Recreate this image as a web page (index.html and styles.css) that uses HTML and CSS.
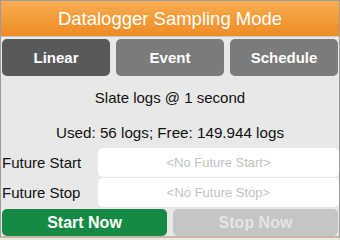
FILE: index.html
```html
<!DOCTYPE html>
<html>
<head>
<meta charset="utf-8">
<link rel="stylesheet" href="styles.css">
</head>
<body>
<div class="frame">
  <div class="header">Datalogger Sampling Mode</div>
  <div class="modes">
    <div class="mode active">Linear</div>
    <div class="mode">Event</div>
    <div class="mode">Schedule</div>
  </div>
  <div class="info first">Slate logs @ 1 second</div>
  <div class="info second">Used: 56 logs; Free: 149.944 logs</div>
  <div class="row">
    <div class="label">Future Start</div>
    <div class="field">&lt;No Future Start&gt;</div>
  </div>
  <div class="row">
    <div class="label">Future Stop</div>
    <div class="field">&lt;No Future Stop&gt;</div>
  </div>
  <div class="actions">
    <div class="btn start">Start Now</div>
    <div class="btn stop">Stop Now</div>
  </div>
</div>
</body>
</html>
```
FILE: styles.css
```css
html, body { margin: 0; padding: 0; }
body {
  width: 340px;
  height: 240px;
  font-family: "Liberation Sans", Arial, sans-serif;
  background: #e9e9e9;
  overflow: hidden;
}
.frame {
  width: 340px;
  height: 238px;
  box-sizing: border-box;
  border: 1px solid #9c9c9c;
  border-bottom: 2px solid #c9b999;
  background: #e8e8e8;
  display: flex;
  flex-direction: column;
}
.header {
  height: 36px;
  background: linear-gradient(#f8ae52, #ee8b23);
  color: #fff;
  font-size: 18.5px;
  display: flex;
  align-items: center;
  justify-content: center;
  border-bottom: 1px solid #c9c9c9;
}
.modes {
  display: flex;
  gap: 6px;
  padding: 1px 1px 0 1px;
  margin-top: 1px;
}
.mode {
  flex: 1;
  height: 37px;
  border-radius: 5px;
  background: #7b7b7b;
  color: #fff;
  font-weight: bold;
  font-size: 15px;
  display: flex;
  align-items: center;
  justify-content: center;
}
.mode.active { background: #58595a; }
.info {
  text-align: center;
  font-size: 15px;
  color: #111;
}
.info.first { margin-top: 13px; }
.info.second { margin-top: 18px; font-size: 15.2px; }
.row {
  display: flex;
  align-items: center;
  height: 30px;
}
.info.second + .row { margin-top: 7px; }
.label {
  width: 96px;
  font-size: 15px;
  color: #111;
  padding-left: 1px;
}
.field {
  flex: 1;
  height: 29px;
  background: #fff;
  border-radius: 5px;
  color: #c2c2c2;
  font-size: 13px;
  display: flex;
  align-items: center;
  justify-content: center;
}
.actions {
  display: flex;
  gap: 6px;
  padding: 2px 1px 0 1px;
}
.btn {
  flex: 1;
  height: 27px;
  border-radius: 5px;
  font-weight: bold;
  font-size: 16px;
  display: flex;
  align-items: center;
  justify-content: center;
}
.btn.start { background: #158a45; color: #fff; }
.btn.stop { background: #c5c5c5; color: #e4e4e4; }
```
